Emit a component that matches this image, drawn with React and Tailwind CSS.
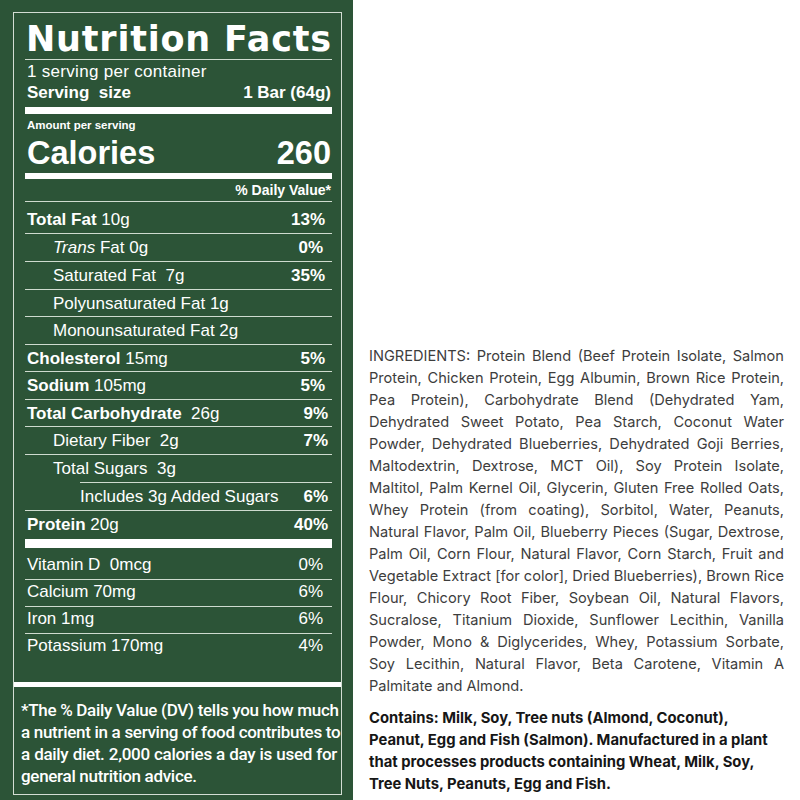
import React from 'react';

const rows = [
  { label: 'Total Fat', bold: true, amt: '10g', dv: '13%', cls: 'h-[31px] pt-[4px] leading-[27px] pl-[2px] pr-[7px]', rule: 'full' },
  { label: 'trans', amt: '0g', dv: '0%', cls: 'h-[27px] leading-[27px] pl-[28px] pr-[9px]', rule: 'full' },
  { label: 'Saturated Fat', amt: '7g', wide: true, dv: '35%', cls: 'h-[27px] leading-[27px] pl-[28px] pr-[7px]', rule: 'full' },
  { label: 'Polyunsaturated Fat', amt: '1g', cls: 'h-[26px] leading-[27px] pl-[28px] pr-[7px]', rule: 'full' },
  { label: 'Monounsaturated Fat', amt: '2g', cls: 'h-[27px] leading-[27px] pl-[28px] pr-[7px]', rule: 'full' },
  { label: 'Cholesterol', bold: true, amt: '15mg', dv: '5%', cls: 'h-[26px] leading-[27px] pl-[2px] pr-[7px]', rule: 'full' },
  { label: 'Sodium', bold: true, amt: '105mg', dv: '5%', cls: 'h-[27px] leading-[27px] pl-[2px] pr-[7px]', rule: 'full' },
  { label: 'Total Carbohydrate', bold: true, amt: '26g', wide: true, dv: '9%', cls: 'h-[26px] leading-[27px] pl-[2px] pr-[4px]', rule: 'full' },
  { label: 'Dietary Fiber', amt: '2g', wide: true, dv: '7%', cls: 'h-[27px] leading-[27px] pl-[28px] pr-[4px]', rule: 'full' },
  { label: 'Total Sugars', amt: '3g', wide: true, cls: 'h-[27px] leading-[27px] pl-[28px] pr-[4px]', rule: 'indent' },
  { label: 'Includes 3g Added Sugars', dv: '6%', cls: 'h-[27px] leading-[27px] pl-[55px] pr-[4px]', rule: 'full' },
  { label: 'Protein', bold: true, amt: '20g', dv: '40%', cls: 'h-[28px] leading-[27px] pl-[2px] pr-[4px]' },
];

const vitamins = [
  { label: 'Vitamin D', amt: '0mcg', wide: true, dv: '0%', cls: 'h-[31px] pt-[3px] leading-[27px]', rule: true },
  { label: 'Calcium', amt: '70mg', dv: '6%', cls: 'h-[26px] leading-[23px]', rule: true },
  { label: 'Iron', amt: '1mg', dv: '6%', cls: 'h-[26px] leading-[23px]', rule: true },
  { label: 'Potassium', amt: '170mg', dv: '4%', cls: 'h-[26px] leading-[24px]' },
];

const ingredients = [
  'INGREDIENTS: Protein Blend (Beef Protein Isolate, Salmon',
  'Protein, Chicken Protein, Egg Albumin, Brown Rice Protein,',
  'Pea Protein), Carbohydrate Blend (Dehydrated Yam,',
  'Dehydrated Sweet Potato, Pea Starch, Coconut Water',
  'Powder, Dehydrated Blueberries, Dehydrated Goji Berries,',
  'Maltodextrin, Dextrose, MCT Oil), Soy Protein Isolate,',
  'Maltitol, Palm Kernel Oil, Glycerin, Gluten Free Rolled Oats,',
  'Whey Protein (from coating), Sorbitol, Water, Peanuts,',
  'Natural Flavor, Palm Oil, Blueberry Pieces (Sugar, Dextrose,',
  'Palm Oil, Corn Flour, Natural Flavor, Corn Starch, Fruit and',
  'Vegetable Extract [for color], Dried Blueberries), Brown Rice',
  'Flour, Chicory Root Fiber, Soybean Oil, Natural Flavors,',
  'Sucralose, Titanium Dioxide, Sunflower Lecithin, Vanilla',
  'Powder, Mono & Diglycerides, Whey, Potassium Sorbate,',
  'Soy Lecithin, Natural Flavor, Beta Carotene, Vitamin A',
];

const contains = [
  'Contains: Milk, Soy, Tree nuts (Almond, Coconut),',
  'Peanut, Egg and Fish (Salmon). Manufactured in a plant',
  'that processes products containing Wheat, Milk, Soy,',
  'Tree Nuts, Peanuts, Egg and Fish.',
];

const footnote = [
  '*The % Daily Value (DV) tells you how much',
  'a nutrient in a serving of food contributes to',
  'a daily diet. 2,000 calories a day is used for',
];

const Rule = ({ indent }) => (
  <div className={indent ? 'h-px bg-[#cfdbcf] ml-[55px]' : 'h-px bg-[#cfdbcf]'} />
);

const NutrientRow = ({ row }) => (
  <>
    <div className={`flex justify-between items-start whitespace-nowrap ${row.cls}`}>
      <span>
        {row.label === 'trans' ? (
          <><i>Trans</i> Fat</>
        ) : (
          <span className={row.bold ? 'font-bold' : ''}>{row.label}</span>
        )}
        {row.amt && <span>{row.wide ? '\u00a0\u00a0' : ' '}{row.amt}</span>}
      </span>
      {row.dv && <span className="font-bold">{row.dv}</span>}
    </div>
    {row.rule && <Rule indent={row.rule === 'indent'} />}
  </>
);

export default function App() {
  return (
    <div className="flex w-[800px] h-[800px] bg-white overflow-hidden">
      {/* Nutrition label */}
      <div className="w-[353px] h-full shrink-0 bg-[#2c5437] pl-[13px] pt-[12px]">
        <div className="w-[329px] h-[783px] border border-[#d3ddd3] flex flex-col text-white font-['Liberation_Sans',Arial,sans-serif]">
          <div className="flex-1 pl-[11px] pr-[9px] text-[17px]">
            <h1 className="mt-[9px] pl-[1px] font-['DejaVu_Sans',sans-serif] font-bold text-[35px] leading-[35px] tracking-[0.8px] whitespace-nowrap">
              Nutrition Facts
            </h1>
            <div className="mt-[2px] h-px bg-[#cfdbcf]" />
            <div className="mt-[1px] pl-[2px] leading-[21px] tracking-[0.3px]">1 serving per container</div>
            <div className="flex justify-between pl-[2px] pr-[1px] leading-[21px] font-bold">
              <span>Serving&nbsp;&nbsp;size</span>
              <span>1 Bar (64g)</span>
            </div>
            <div className="mt-[4px] h-[7px] bg-white" />
            <div className="mt-[4px] pl-[2px] text-[11.5px] leading-[14px] font-bold">Amount per serving</div>
            <div className="mt-[4px] flex justify-between pl-[2px] pr-[1px] text-[32.5px] leading-[34px] font-bold">
              <span>Calories</span>
              <span>260</span>
            </div>
            <div className="mt-[3px] h-[6px] bg-white" />
            <div className="mt-[3px] pr-[1px] text-right text-[14px] leading-[16px] font-bold">% Daily Value*</div>
            <div className="mt-[3px] h-px bg-[#cfdbcf]" />
            {rows.map((r, i) => (
              <NutrientRow key={i} row={r} />
            ))}
            <div className="h-[9px] bg-white" />
            {vitamins.map((v, i) => (
              <React.Fragment key={i}>
                <div className={`flex justify-between items-start pl-[2px] pr-[9px] whitespace-nowrap ${v.cls}`}>
                  <span>
                    {v.label}
                    {v.wide ? '\u00a0\u00a0' : ' '}
                    {v.amt}
                  </span>
                  <span>{v.dv}</span>
                </div>
                {v.rule && <Rule />}
              </React.Fragment>
            ))}
          </div>
          <div className="h-[5px] bg-white" />
          <div className="h-[107px] pl-[7px] pr-[4px] pt-[12px] font-['Roboto',sans-serif] font-medium text-[17px] leading-[22px] tracking-[-0.3px]">
            {footnote.map((l, i) => (
              <div key={i} className="whitespace-nowrap [text-align-last:justify]">{l}</div>
            ))}
            <div>general nutrition advice.</div>
          </div>
        </div>
      </div>

      {/* Ingredients */}
      <div className="flex-1 pl-[16px] pt-[345px] font-['Inter',sans-serif] leading-[22px]">
        <div className="w-[415px] text-[14.6px] text-[#3d3d3d]">
          {ingredients.map((l, i) => (
            <div key={i} className="whitespace-nowrap [text-align-last:justify]">{l}</div>
          ))}
          <div>Palmitate and Almond.</div>
        </div>
        <div className="mt-[10px] w-[415px] text-[14.8px] font-bold text-[#161616]">
          {contains.map((l, i) => (
            <div key={i} className="whitespace-nowrap">{l}</div>
          ))}
        </div>
      </div>
    </div>
  );
}
